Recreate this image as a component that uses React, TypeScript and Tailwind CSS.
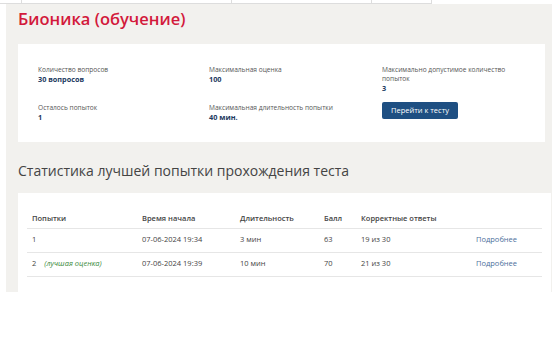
import React from 'react';

const ATTEMPTS = [
  { n: '1', best: false, start: '07-06-2024 19:34', dur: '3 мин', score: '63', correct: '19 из 30' },
  { n: '2', best: true, start: '07-06-2024 19:39', dur: '10 мин', score: '70', correct: '21 из 30' },
];

const Field: React.FC<{ label: React.ReactNode; value: string }> = ({ label, value }) => (
  <div>
    <p className="text-[6.6px] leading-[9px] text-[#555]">{label}</p>
    <p className="text-[7.3px] leading-[10px] font-bold text-[#1d3a61]">{value}</p>
  </div>
);

const App: React.FC = () => {
  return (
    <div className="w-[554px] h-[345px] bg-white overflow-hidden" style={{ fontFamily: '"Open Sans", "Noto Sans", sans-serif' }}>
      {/* end of the table above */}
      <div className="flex h-[4px] w-[432px] border-b border-[#ddd]">
        <div className="w-[22px] border-r border-[#ddd]" />
        <div className="w-[210px] border-r border-[#ddd]" />
        <div className="w-[140px] border-r border-[#ddd]" />
        <div className="w-[60px] border-r border-[#ddd]" />
      </div>

      <div className="ml-[6px] mr-[2px] h-[288px] bg-[#f2f1ee] pl-[12px] flex flex-col">
        <h1 className="text-[16.5px] leading-[26px] font-semibold text-[#d2193b] mt-[2px]">Бионика (обучение)</h1>

        <div className="mt-[12px] mr-[7px] h-[98px] bg-white pl-[20px] pt-[21px] grid grid-cols-[171px_173px_1fr] grid-rows-[38px_auto]">
          <Field label="Количество вопросов" value="30 вопросов" />
          <Field label="Максимальная оценка" value="100" />
          <Field label={<>Максимально допустимое количество<br />попыток</>} value="3" />
          <Field label="Осталось попыток" value="1" />
          <Field label="Максимальная длительность попытки" value="40 мин." />
          <div>
            <button className="block -mt-[1px] w-[76px] h-[17px] bg-[#1e4f82] text-white text-[7.5px] rounded-[2px]">Перейти к тесту</button>
          </div>
        </div>

        <h2 className="mt-[18px] text-[14px] leading-[22px] text-[#444]">Статистика лучшей попытки прохождения теста</h2>

        <div className="mt-[11px] mr-[1px] flex-1 bg-white px-[9px] pt-[16px]">
          <table className="w-full text-[7.5px] text-[#444] border-collapse">
            <thead>
              <tr className="h-[19px] border-b border-[#e6e6e6] text-left">
                <th className="pl-[5px] w-[115px] font-semibold">Попытки</th>
                <th className="w-[98px] font-semibold">Время начала</th>
                <th className="w-[84px] font-semibold">Длительность</th>
                <th className="w-[37px] font-semibold">Балл</th>
                <th className="w-[115px] font-semibold">Корректные ответы</th>
                <th />
              </tr>
            </thead>
            <tbody>
              {ATTEMPTS.map((a) => (
                <tr key={a.n} className="h-[24px] border-b border-[#e6e6e6]">
                  <td className="pl-[5px]">
                    {a.n}
                    {a.best && <span className="ml-[8px] italic text-[#3b8a3b]">(лучшая оценка)</span>}
                  </td>
                  <td>{a.start}</td>
                  <td>{a.dur}</td>
                  <td>{a.score}</td>
                  <td>{a.correct}</td>
                  <td className="text-[#4c6f9b]">Подробнее</td>
                </tr>
              ))}
            </tbody>
          </table>
        </div>
      </div>
    </div>
  );
};

export default App;
